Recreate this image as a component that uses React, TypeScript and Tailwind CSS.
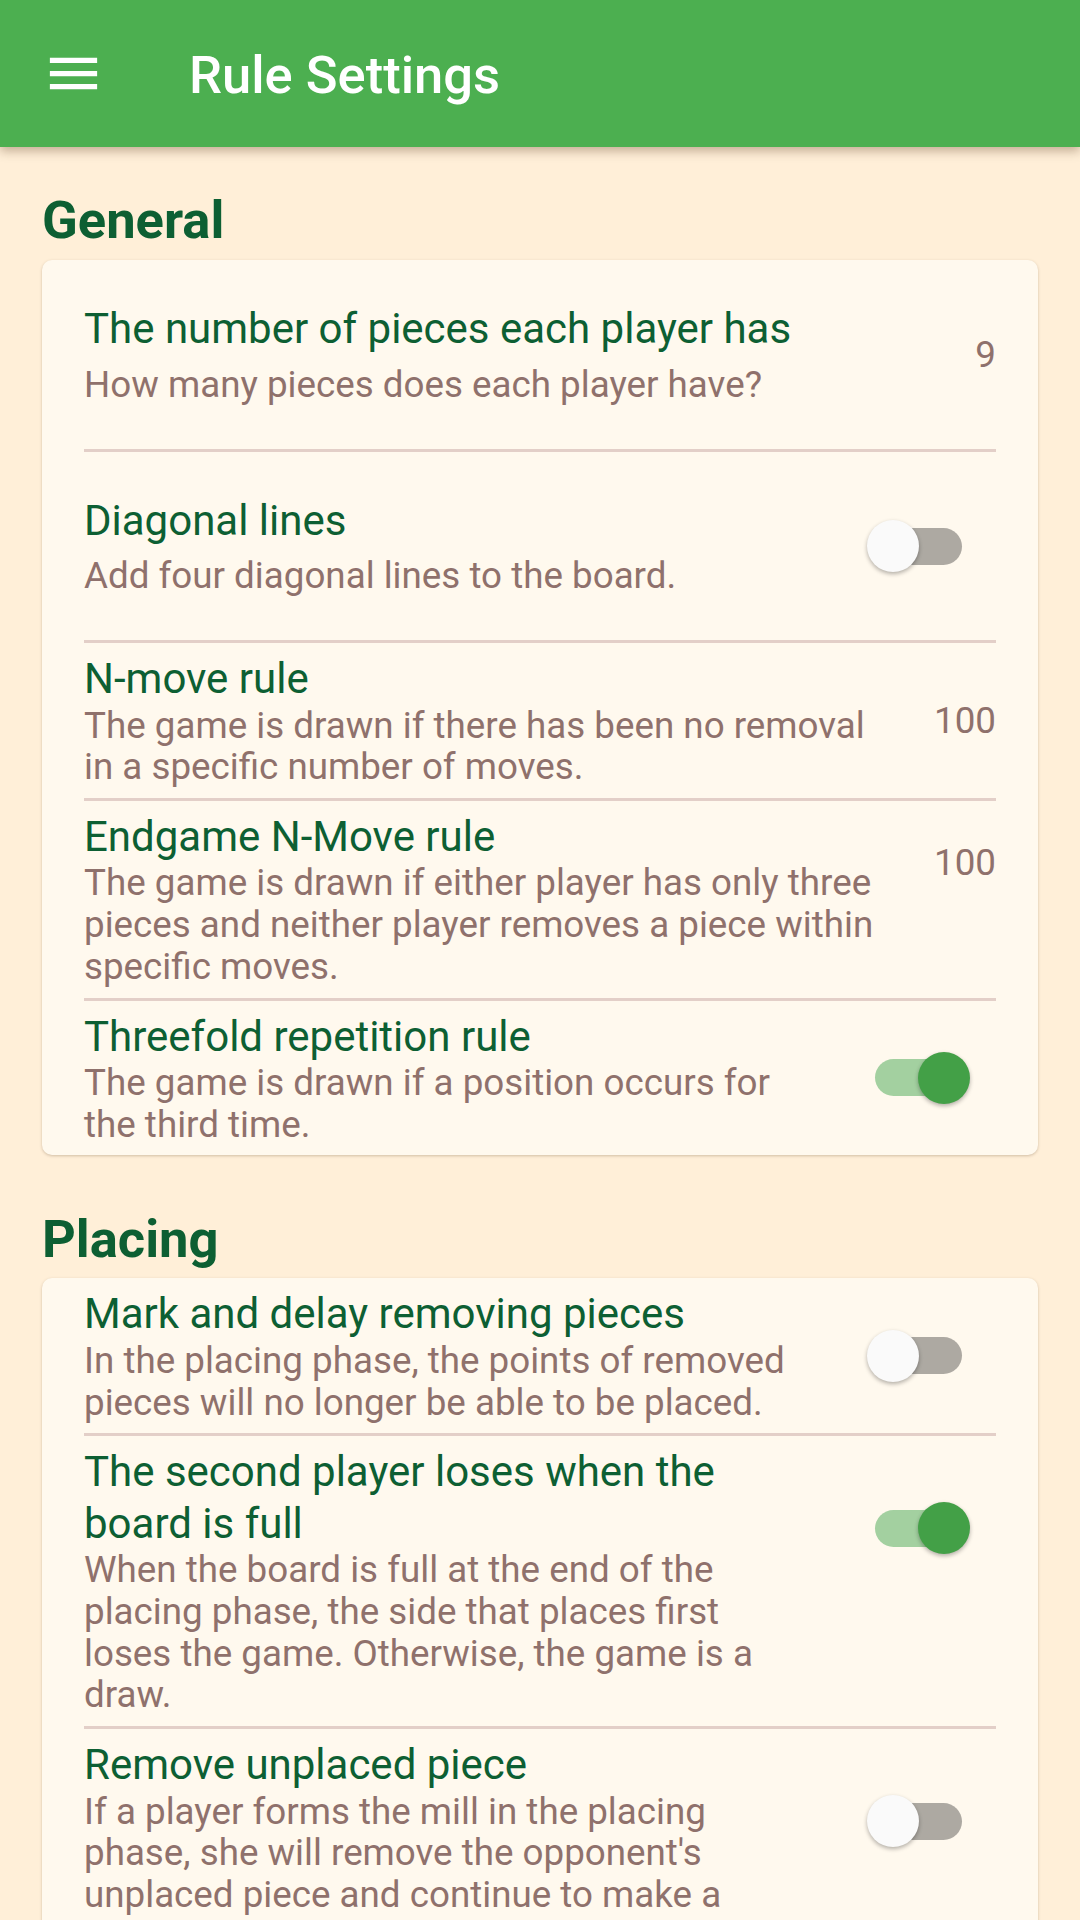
import React from "react";

const FONT = { fontFamily: "Roboto, 'Noto Sans', sans-serif" };

function Switch({ on }: { on: boolean }) {
  return (
    <div className="relative w-[155px] h-[52px] shrink-0">
      <div
        className={`absolute left-[34px] top-[7.5px] w-[87px] h-[37px] rounded-full ${
          on ? "bg-[#A3D0A0]" : "bg-[#ADA9A2]"
        }`}
      />
      <div
        className={`absolute top-0 w-[52px] h-[52px] rounded-full shadow-[0_2px_4px_rgba(0,0,0,0.3)] ${
          on ? "left-[77px] bg-[#43A047]" : "left-[26px] bg-[#FAFAFA]"
        }`}
      />
    </div>
  );
}

function Value({ v }: { v: string }) {
  return (
    <div className="shrink-0 text-[36.75px] leading-[41.7px] text-[#8F716C]">{v}</div>
  );
}

type TileProps = {
  title: string;
  subtitle: string;
  trailing: React.ReactNode;
  top?: "switch" | "value";
};

function Tile({ title, subtitle, trailing, top }: TileProps) {
  return (
    <div className={`flex py-[10px] gap-[42px] ${top ? "items-start" : "items-center"}`}>
      <div className="flex-1 min-w-0">
        <div className="text-[42px] leading-[51.5px] text-[#0D5F33]">{title}</div>
        <div className="text-[36.75px] leading-[41.7px] text-[#8F716C]">{subtitle}</div>
      </div>
      <div className={top === "switch" ? "mt-[56px]" : top === "value" ? "mt-[31px]" : ""}>
        {trailing}
      </div>
    </div>
  );
}

function BigTile({
  title,
  subtitle,
  trailing,
  h,
}: {
  title: string;
  subtitle: string;
  trailing: React.ReactNode;
  h: string;
}) {
  return (
    <div className={`flex items-center gap-[42px] ${h}`}>
      <div className="flex-1 min-w-0 flex flex-col gap-[9px]">
        <div className="text-[42px] leading-[51.5px] text-[#0D5F33]">{title}</div>
        <div className="text-[36.75px] leading-[41.7px] text-[#8F716C]">{subtitle}</div>
      </div>
      {trailing}
    </div>
  );
}

function Divider() {
  return <div className="h-[3px] bg-[#E3CFC8]" />;
}

function Heading({ children, className }: { children: React.ReactNode; className: string }) {
  return (
    <div
      className={`pl-[42px] text-[52.5px] leading-[61.5px] font-bold text-[#0D5F33] ${className}`}
    >
      {children}
    </div>
  );
}

function Card({ children }: { children: React.ReactNode }) {
  return (
    <div className="mx-[42px] rounded-[10px] bg-[#FFF9EE] px-[42px] shadow-[0_1px_3px_rgba(90,60,30,0.28)]">
      {children}
    </div>
  );
}

export default function App() {
  return (
    <div
      className="w-[1080px] h-[1920px] overflow-hidden bg-[#FFEFD8] flex flex-col"
      style={FONT}
    >
      <div className="relative z-10 h-[147px] shrink-0 bg-[#4CAF50] flex items-center shadow-[0_4px_10px_rgba(80,50,20,0.35)]">
        <svg className="ml-[42px] w-[63px] h-[63px]" viewBox="0 0 24 24" fill="#FFFFFF">
          <path d="M3 18h18v-2H3v2zm0-5h18v-2H3v2zm0-7v2h18V6H3z" />
        </svg>
        <div className="ml-[84px] pt-[5px] text-[52.5px] leading-[61.5px] font-medium text-white">
          Rule Settings
        </div>
      </div>

      <Heading className="pt-[43px] pb-[8.5px]">General</Heading>
      <Card>
        <BigTile
          h="h-[189px]"
          title="The number of pieces each player has"
          subtitle="How many pieces does each player have?"
          trailing={<Value v="9" />}
        />
        <Divider />
        <BigTile
          h="h-[188px]"
          title="Diagonal lines"
          subtitle="Add four diagonal lines to the board."
          trailing={<Switch on={false} />}
        />
        <Divider />
        <Tile
          title="N-move rule"
          subtitle="The game is drawn if there has been no removal in a specific number of moves."
          trailing={<Value v="100" />}
        />
        <Divider />
        <Tile
          title="Endgame N-Move rule"
          subtitle="The game is drawn if either player has only three pieces and neither player removes a piece within specific moves."
          trailing={<Value v="100" />}
          top="value"
        />
        <Divider />
        <Tile
          title="Threefold repetition rule"
          subtitle="The game is drawn if a position occurs for the third time."
          trailing={<Switch on={true} />}
        />
      </Card>

      <Heading className="mt-[54px] pb-[7.5px]">Placing</Heading>
      <Card>
        <Tile
          title="Mark and delay removing pieces"
          subtitle="In the placing phase, the points of removed pieces will no longer be able to be placed."
          trailing={<Switch on={false} />}
        />
        <Divider />
        <Tile
          title="The second player loses when the board is full"
          subtitle="When the board is full at the end of the placing phase, the side that places first loses the game. Otherwise, the game is a draw."
          trailing={<Switch on={true} />}
          top="switch"
        />
        <Divider />
        <Tile
          title="Remove unplaced piece"
          subtitle="If a player forms the mill in the placing phase, she will remove the opponent's unplaced piece and continue to make a move."
          trailing={<Switch on={false} />}
          top="switch"
        />
      </Card>
    </div>
  );
}
